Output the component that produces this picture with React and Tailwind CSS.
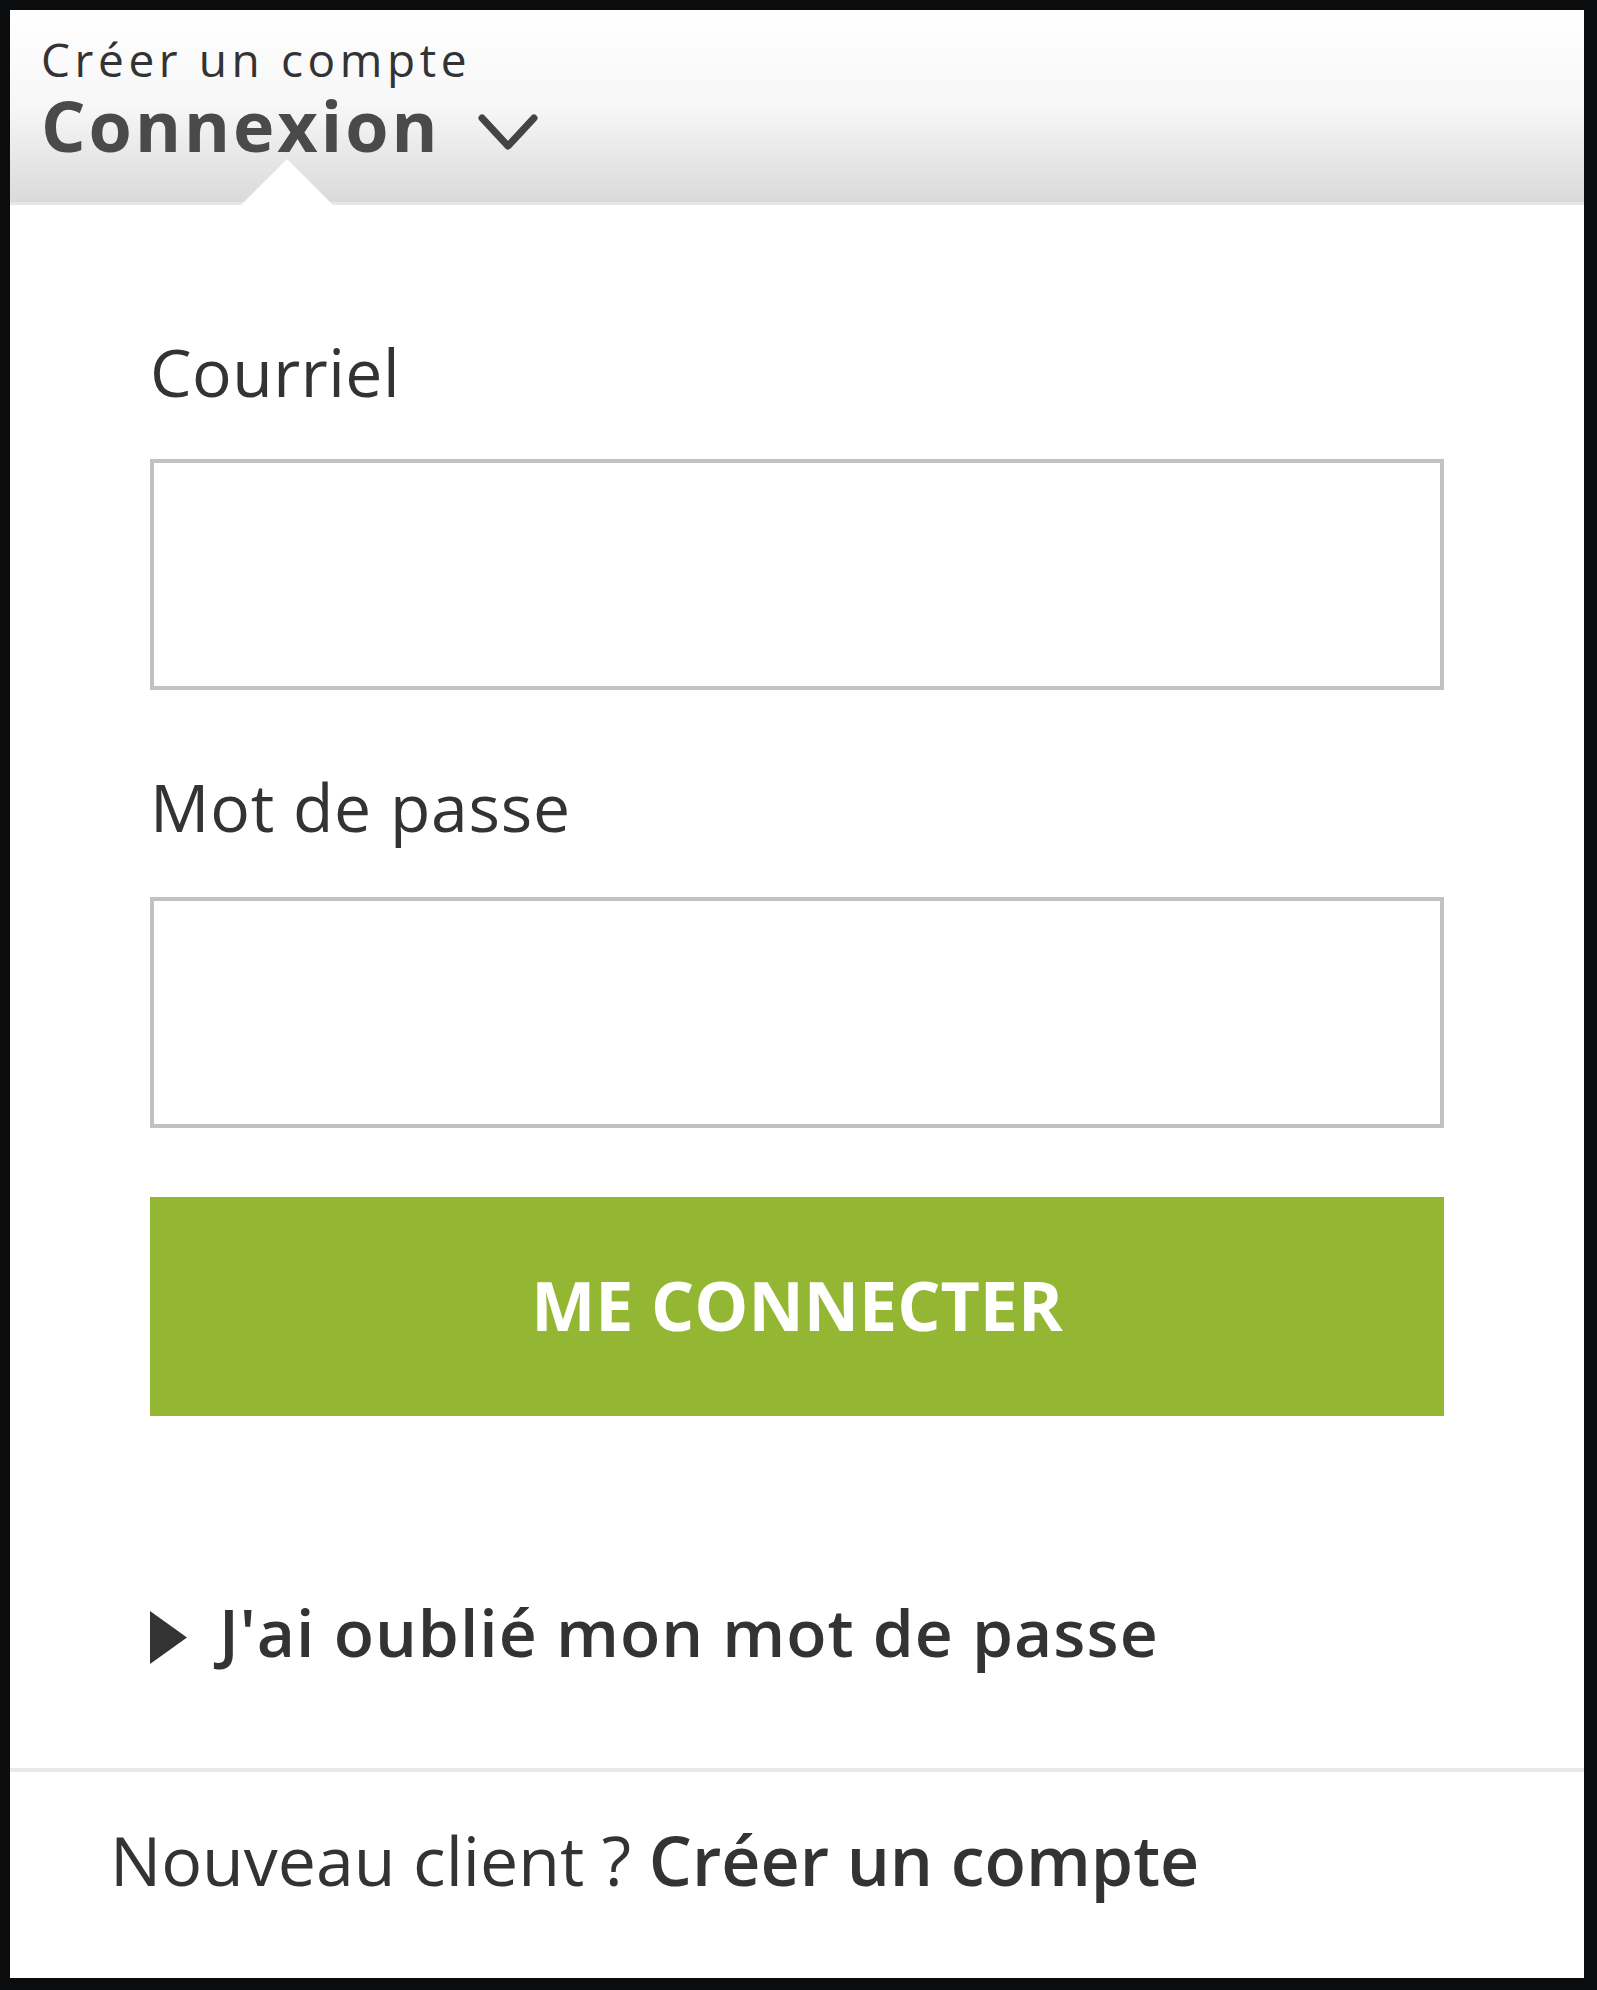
import React, { useState } from 'react';

const ChevronDown = () => (
  <svg width="60" height="38" viewBox="0 0 60 38" className="block">
    <path d="M4 4 L30 32 L56 4" fill="none" stroke="#444" strokeWidth="7" strokeLinecap="round" strokeLinejoin="round" />
  </svg>
);

const App = () => {
  const [email, setEmail] = useState('');
  const [password, setPassword] = useState('');

  return (
    <div className="min-h-[1990px] w-[1597px] bg-[#0b0c0e] pt-[10px] pl-[10px] font-['Open_Sans',sans-serif] text-[#333]">
      <div className="flex h-[1968px] w-[1574px] flex-col bg-white">
        {/* header */}
        <div className="relative h-[195px] shrink-0 border-b-[3px] border-[#e7e7e7] bg-linear-to-b from-white via-[#f7f7f7] to-[#dadada] pl-[31px] pt-[26px]">
          <div className="text-[46px] leading-none tracking-[4.6px] text-[#333]">Créer un compte</div>
          <div className="mt-[8px] flex items-center">
            <span className="text-[70px] font-bold leading-none tracking-[3px] text-[#4a4a4a]">Connexion</span>
            <span className="ml-[37px] mt-[16px]">
              <ChevronDown />
            </span>
          </div>
          <svg width="92" height="46" viewBox="0 0 92 46" className="absolute bottom-[-3px] left-[231px]">
            <polygon points="0,46 46,0 92,46" fill="#fff" />
          </svg>
        </div>

        {/* form */}
        <div className="flex flex-col px-[140px] pt-[133px]">
          <label className="text-[66px] leading-none tracking-[0.5px]">Courriel</label>
          <input
            type="email"
            value={email}
            onChange={(e) => setEmail(e.target.value)}
            className="mt-[55px] h-[231px] w-full border-[4px] border-[#c2c2c2] bg-white px-6 text-[60px] outline-none"
          />
          <label className="mt-[83px] text-[66px] leading-none tracking-[0.8px]">Mot de passe</label>
          <input
            type="password"
            value={password}
            onChange={(e) => setPassword(e.target.value)}
            className="mt-[58px] h-[231px] w-full border-[4px] border-[#c2c2c2] bg-white px-6 text-[60px] outline-none"
          />
          <button className="mt-[69px] flex h-[219px] w-full items-center justify-center bg-[#93b732] pb-[4px] text-[68px] font-bold leading-none text-white">
            ME CONNECTER
          </button>

          <div className="mt-[182px] flex items-center">
            <svg width="37" height="53" viewBox="0 0 37 53" className="mt-[12px] block shrink-0">
              <polygon points="0,0 37,26.5 0,53" fill="#333" />
            </svg>
            <a href="#" className="ml-[32px] text-[66px] font-semibold leading-none tracking-[1px] text-[#333]">
              J'ai oublié mon mot de passe
            </a>
          </div>
        </div>

        <div className="mt-[104px] h-[4px] w-full bg-[#e9e9e9]" />

        {/* footer */}
        <div className="pl-[100px] pt-[54px] text-[68px] leading-none">
          <span>Nouveau client ? </span>
          <a href="#" className="font-semibold text-[#333]">Créer un compte</a>
        </div>
      </div>
    </div>
  );
};

export default App;
